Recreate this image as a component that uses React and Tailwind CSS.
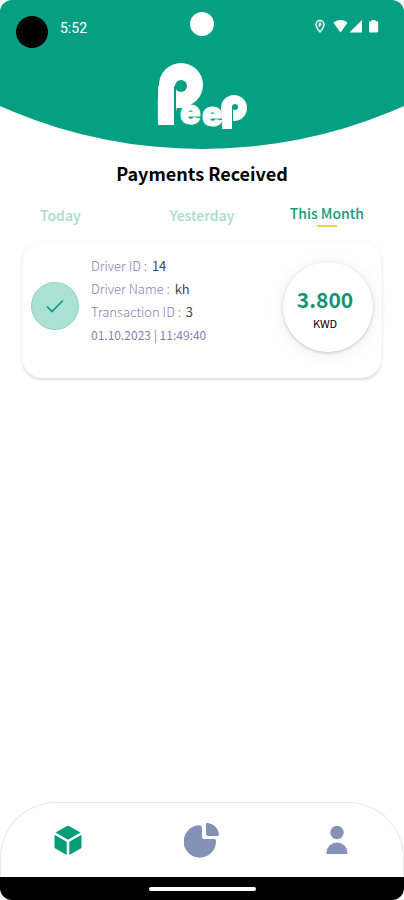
import React, { useState } from 'react';

const tabs = [
  { label: 'Today', align: 'justify-self-start' },
  { label: 'Yesterday', align: 'justify-self-center' },
  { label: 'This Month', align: 'justify-self-end' }
];

const payments = [
  { driverId: '14', driverName: 'kh', transactionId: '3', date: '01.10.2023 | 11:49:40', amount: '3.800', currency: 'KWD' }
];

const StatusBar = () => (
  <div className="relative flex h-[52px] items-center justify-between pl-4 pr-6 font-[Roboto] text-white">
    <div className="flex items-center gap-3 pt-1">
      <div className="mt-2 h-8 w-8 rounded-full bg-black"></div>
      <span className="text-sm leading-4">5:52</span>
    </div>
    <div className="absolute left-1/2 top-3 h-6 w-6 -translate-x-1/2 rounded-full bg-white"></div>
    <div className="flex items-center">
      <svg className="mr-1 h-4 w-4" viewBox="0 0 16 16" fill="none" stroke="currentColor">
        <path d="M8 14C5.600 11 4 9.200 4 6.500a4 4 0 0 1 8 0C12 9.200 10.400 11 8 14Z" strokeWidth="1.400" />
        <path d="M7.200 9V5.200h1.600v2H7.200" strokeWidth="1.100" />
      </svg>
      <svg className="h-4 w-4" viewBox="0 0 16 16" fill="currentColor">
        <path d="M8.500 14.500L1.500 4.800C3.300 3 5.600 2 8.500 2s5.200 1 7 2.800Z" />
      </svg>
      <svg className="h-4 w-4" viewBox="0 0 16 16" fill="currentColor">
        <path d="M14 2v12.500H1.500Z" />
      </svg>
      <svg className="ml-1 h-4 w-3" viewBox="0 0 12 16" fill="currentColor">
        <path d="M3.500 2h4v1.200H9a1.200 1.200 0 0 1 1.200 1.200v9A1.200 1.200 0 0 1 9 14.500H2.200A1.200 1.200 0 0 1 1 13.400v-9a1.200 1.200 0 0 1 1.200-1.200h1.300Z" />
      </svg>
    </div>
  </div>
);

const Logo = () => (
  <svg className="mx-auto mt-1 h-[80px] w-[100px]" viewBox="0 0 100 80" role="img" aria-label="Peep">
    <g fill="#fff">
      {/* Round heads and stems of both p shapes */}
      <circle cx="29" cy="29" r="22" />
      <circle cx="82" cy="52" r="13" />
      <rect x="6" y="30" width="16" height="39" />
      <rect x="24" y="30" width="12" height="22" />
      <rect x="70" y="52" width="10" height="21" />
      <text fontFamily="Inter, sans-serif" fontWeight="900" stroke="#fff" strokeWidth="1">
        <tspan x="5" y="66" fontSize="30">P</tspan>
        <tspan x="28" y="68" fontSize="34">e</tspan>
        <tspan x="50" y="70" fontSize="34">e</tspan>
        <tspan x="72" y="64" fontSize="24">p</tspan>
      </text>
    </g>
    <g fill="#059f84">
      <circle cx="29" cy="30" r="6" />
      <rect x="22" y="30" width="2" height="39" />
      <circle cx="83" cy="51" r="3" />
      <rect x="80" y="51" width="1" height="15" />
    </g>
  </svg>
);

const PaymentCard = ({ payment }) => (
  <article className="flex h-[137px] rounded-[20px] border border-gray-50 bg-white px-2 shadow-[0_2px_3px_rgba(0,0,0,0.13)]">
    <div className="mt-10 flex h-12 w-12 shrink-0 items-center justify-center rounded-full border border-[#8dd6c2] bg-[#abe1d4]">
      <svg className="h-5 w-5" viewBox="0 0 20 20" fill="none" stroke="#079b78" strokeWidth="1.600">
        <path d="M2 10.500l5 5L18 4.500" />
      </svg>
    </div>
    <div className="ml-3 flex-1 pt-3 text-[13px] font-light leading-[23px] text-[#8583ae]">
      <p>Driver ID : <span className="ml-[2px] font-normal text-[#444]">{payment.driverId}</span></p>
      <p>Driver Name : <span className="ml-[2px] font-normal text-[#444]">{payment.driverName}</span></p>
      <p>Transaction ID : <span className="ml-[2px] font-normal text-[#444]">{payment.transactionId}</span></p>
      <p className="text-xs font-normal leading-[23px]">{payment.date}</p>
    </div>
    <div className="mt-5 flex h-[90px] w-[90px] shrink-0 flex-col items-center justify-center rounded-full bg-white pr-1.5 pt-1 shadow-[0_1px_3px_rgba(0,0,0,0.2),0_2px_18px_rgba(0,0,0,0.08)]">
      <span className="text-[21px] font-bold leading-7 text-[#149472]">{payment.amount}</span>
      <span className="text-[11px] leading-5 text-black">{payment.currency}</span>
    </div>
  </article>
);

const BottomNav = () => (
  <nav className="mt-auto flex h-[75px] items-center justify-around rounded-t-[56px] border border-b-0 border-gray-200 bg-white">
    <button type="button" aria-label="Payments">
      <svg className="h-9 w-9" viewBox="0 0 36 36" fill="#079b78">
        <path d="M18 3.500L30.500 10.500 18 17.700 5.500 10.500Z" />
        <path d="M4.500 12.800L16.700 19.800V33L4.500 26Z" />
        <path d="M31.500 12.800L19.300 19.800V33l12.200-7Z" />
      </svg>
    </button>
    <button type="button" aria-label="Statistics">
      <svg className="h-9 w-9" viewBox="0 0 36 36" fill="#8492b8">
        <path d="M15.500 3.300c1.300-.1 2.500.7 2.500 2V15a2 2 0 0 0 2 2h10c1.400 0 2.200 1 2 2.400A16.200 16.200 0 1 1 15.500 3.300Z" />
        <path d="M22 2.500c0-1.200.8-1.800 2-1.600a13 13 0 0 1 11 10.800c.2 1.300-.5 2.300-1.800 2.300H24a2 2 0 0 1-2-2Z" />
      </svg>
    </button>
    <button type="button" aria-label="Profile">
      <svg className="h-9 w-9" viewBox="0 0 36 36" fill="#8492b8">
        <circle cx="19" cy="10.500" r="6.700" />
        <path d="M8.500 32v-1a10.500 10.500 0 0 1 21 0v1Z" />
      </svg>
    </button>
  </nav>
);

const App = () => {
  const [activeTab, setActiveTab] = useState('This Month');

  return (
    <div className="flex min-h-screen flex-col bg-white font-['Noto_Sans_CJK_SC',sans-serif]">
      {/* Header */}
      <header className="relative h-[149px] overflow-hidden rounded-t-xl">
        <div className="absolute bottom-0 left-1/2 h-[992px] w-[992px] -translate-x-1/2 rounded-full bg-[#059f84]"></div>
        <div className="relative">
          <StatusBar />
          <Logo />
        </div>
      </header>

      <main className="px-[22px]">
        <h1 className="mt-3 text-center text-lg font-bold leading-6 text-black">Payments Received</h1>

        {/* Tabs */}
        <div className="mt-4 grid grid-cols-3 items-start px-[18px]">
          {tabs.map(({ label, align }) => (
            <button
              key={label}
              type="button"
              onClick={() => setActiveTab(label)}
              className={`flex flex-col items-center text-sm font-medium leading-6 ${align} ${activeTab === label ? 'text-[#189a78]' : 'pt-[2px] text-[#a5decb]'}`}
            >
              {label}
              {activeTab === label && <span className="h-[2px] w-5 bg-[#f5cd4c]"></span>}
            </button>
          ))}
        </div>

        {/* Payments list */}
        <div className="mt-[14px] flex flex-col gap-4">
          {payments.map((payment) => (
            <PaymentCard key={payment.transactionId} payment={payment} />
          ))}
        </div>
      </main>

      <BottomNav />
      <div className="flex h-[23px] items-center justify-center rounded-b-xl bg-black">
        <div className="h-1 w-[107px] rounded-full bg-white"></div>
      </div>
    </div>
  );
};

export default App;
